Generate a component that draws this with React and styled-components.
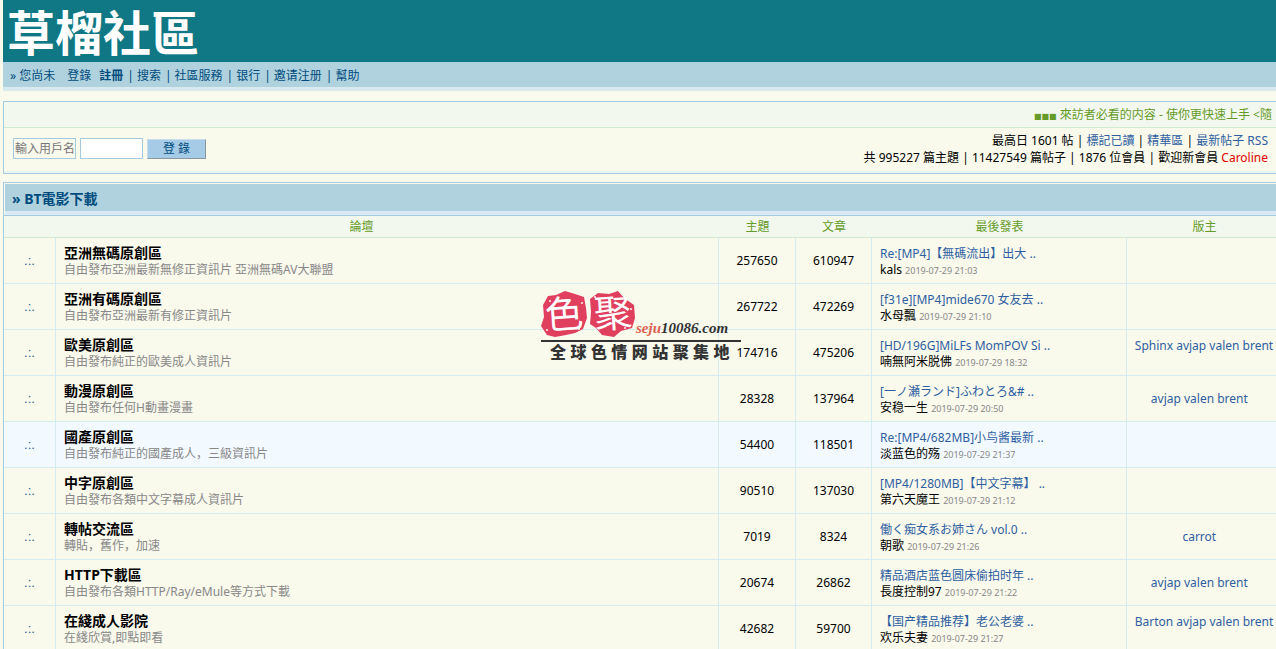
import React from "react";
import styled, { createGlobalStyle } from "styled-components";

const sans = '"Noto Sans", "Noto Sans CJK SC", "Noto Sans CJK TC", "Noto Sans CJK JP", sans-serif';

const Global = createGlobalStyle`
  * { box-sizing: border-box; }
  body {
    margin: 0;
    background: #f9f9ec;
    color: #000;
    font: 12px/17px ${sans};
    overflow-x: hidden;
  }
  a { color: #2f5fa1; text-decoration: none; }
  a:hover { text-decoration: underline; }
  input, button { font: inherit; }
`;

const Page = styled.div`
  position: relative;
  margin: 0 -7px 0 3px;
`;

const Banner = styled.header`
  height: 62px;
  padding: 0 4px;
  background: #0f7884;
`;

const SiteName = styled.h1`
  margin: 0;
  color: #fff;
  font: 700 48px/60px "Noto Sans CJK TC", sans-serif;
`;

const Nav = styled.nav`
  display: flex;
  align-items: center;
  gap: 4px;
  height: 29px;
  padding: 2px 7px 0;
  background: #afd2de;
  border-bottom: 4px solid #d9eaee;
  color: #004c7d;
  a { color: #004c7d; }
`;

const NavGroup = styled.span`
  display: flex;
  gap: 8px;
  &:first-child { gap: 12px; }
`;

const NavItem = styled.span`
  display: flex;
  gap: 3px;
`;

const Panel = styled.section`
  margin-top: ${(p) => p.$top}px;
  border: 1px solid #a6cbe0;
`;

const Notice = styled.div`
  display: flex;
  justify-content: flex-end;
  height: 26px;
  padding-right: 8px;
  background: #f3f8ef;
  border-bottom: 1px solid #d0ecd0;
  color: #659b28;
  line-height: 25px;
`;

const NoticeText = styled.div`
  width: 240px;
  overflow: hidden;
  white-space: nowrap;
`;

const Squares = styled.span`
  font: 8px/20px "DejaVu Sans", sans-serif;
`;

const Tools = styled.div`
  display: flex;
  justify-content: space-between;
  align-items: flex-start;
  padding: 4px 14px 5px 9px;
  border-bottom: 2px solid #e8f4f2;
`;

const Login = styled.form`
  display: flex;
  gap: 4px;
  padding-top: 6px;
`;

const Field = styled.input`
  width: 63px;
  height: 21px;
  padding: 0 1px;
  border: 1px solid #a6cbe0;
  background: ${(p) => (p.$plain ? "#f9f9ec" : "#fff")};
  &::placeholder { color: #777; opacity: 1; }
`;

const Submit = styled.button`
  width: 59px;
  height: 20px;
  margin-top: 1px;
  padding: 0;
  border: 1px solid;
  border-color: #c8dcec #8a96a0 #8a96a0 #c8dcec;
  background: #a6cbe7;
  color: #004c7d;
  font-size: 12px;
  line-height: 18px;
`;

const Stats = styled.div`
  text-align: right;
`;

const NewMember = styled.a`
  && { color: #e00000; }
`;

const SectionTitle = styled.h2`
  margin: 1px 0 0 1px;
  padding: 0 7px;
  height: 31px;
  background: #afd2de;
  border-bottom: 4px solid #d9e9f5;
  color: #004c7d;
  font-size: 14px;
  line-height: 29px;
`;

const Forums = styled.table`
  width: 100%;
  table-layout: fixed;
  border-collapse: separate;
  border-spacing: 0;
`;

const Th = styled.th`
  height: 23px;
  padding: 0;
  background: #f3f8ef;
  border-top: 1px solid #a6cbe0;
  border-bottom: 1px solid #d4e8d0;
  color: #659b28;
  font-weight: 400;
  line-height: 20px;
`;

const Row = styled.tr`
  height: 46px;
  background: ${(p) => (p.$active ? "#f3faff" : "transparent")};
`;

const Cell = styled.td`
  padding: 0 8px;
  border-bottom: 1px solid #d4ebf2;
  border-right: 1px solid #d4ebf2;
  text-align: ${(p) => (p.$center ? "center" : "left")};
  line-height: 15px;
`;

const TextCell = styled(Cell)`
  padding-top: 2px;
`;

const MarkCell = styled(Cell)`
  color: #2f5f91;
  font: 13px/15px "Liberation Sans", sans-serif;
`;

const ModCell = styled(Cell)`
  padding: 0 6px;
`;

const ForumName = styled.a`
  display: block;
  && { color: #000; }
  font-size: 14px;
  font-weight: 700;
  line-height: 17px;
`;

const Summary = styled.div`
  color: #888;
  line-height: 18px;
`;

const PostTitle = styled.a`
  display: block;
  line-height: 16px;
  white-space: nowrap;
`;

const Time = styled.time`
  color: #888;
  font-size: 9px;
`;

const Stamp = styled.aside`
  position: absolute;
  top: 288px;
  left: 538px;
  width: 200px;
  pointer-events: none;
`;

const StampTop = styled.div`
  display: flex;
  align-items: flex-end;
  height: 54px;
  border-bottom: 2px solid #333;
  svg { overflow: visible; }
`;

const StampUrl = styled.span`
  color: #333;
  font: italic 700 15px/24px "Liberation Serif", serif;
  em { color: #e0604e; }
`;

const StampLine = styled.div`
  padding-left: 9px;
  color: #333;
  font: 900 16px/22px "Liberation Sans", "Noto Sans CJK SC", sans-serif;
  white-space: nowrap;
`;

const forums = [
  ["亞洲無碼原創區", "自由發布亞洲最新無修正資訊片 亞洲無碼AV大聯盟", 257650, 610947, "Re:[MP4]【無碼流出】出大 ..", "kals", "21:03", ""],
  ["亞洲有碼原創區", "自由發布亞洲最新有修正資訊片", 267722, 472269, "[f31e][MP4]mide670 女友去 ..", "水母飄", "21:10", ""],
  ["歐美原創區", "自由發布純正的歐美成人資訊片", 174716, 475206, "[HD/196G]MiLFs MomPOV Si ..", "喃無阿米脱佛", "18:32", "Sphinx avjap valen brent"],
  ["動漫原創區", "自由發布任何H動畫漫畫", 28328, 137964, "[一ノ瀬ランド]ふわとろ&# ..", "安稳一生", "20:50", "avjap valen brent"],
  ["國產原創區", "自由發布純正的國產成人，三級資訊片", 54400, 118501, "Re:[MP4/682MB]小鸟酱最新 ..", "淡蓝色的殇", "21:37", ""],
  ["中字原創區", "自由發布各類中文字幕成人資訊片", 90510, 137030, "[MP4/1280MB]【中文字幕】 ..", "第六天魔王", "21:12", ""],
  ["轉帖交流區", "轉貼，舊作，加速", 7019, 8324, "働く痴女系お姉さん vol.0 ..", "朝歌", "21:26", "carrot"],
  ["HTTP下載區", "自由發布各類HTTP/Ray/eMule等方式下載", 20674, 26862, "精品酒店蓝色圆床偷拍时年 ..", "長度控制97", "21:22", "avjap valen brent"],
  ["在綫成人影院", "在綫欣賞,即點即看", 42682, 59700, "【国产精品推荐】老公老婆 ..", "欢乐夫妻", "21:27", "Barton avjap valen brent"],
];

const navLinks = ["搜索", "社區服務", "银行", "邀请注册", "幫助"];

function Seals() {
  return (
    <svg width="95" height="50" viewBox="0 0 95 50" aria-hidden="true">
      <g fill="#e0405e">
        <path d="M2 15 L7 6 L15 5 L24 1 L34 4 L43 7 L45 18 L46 28 L42 39 L34 43 L25 45 L14 47 L6 45 L0 36 L3 27 Z" />
        <path d="M49 9 L57 3 L68 4 L77 1 L83 8 L93 15 L94 28 L91 38 L80 41 L73 47 L61 45 L55 38 L49 34 L50 22 Z" />
      </g>
      <g fill="#f9f9ec">
        <circle cx="9" cy="11" r="1" />
        <circle cx="41" cy="13" r="1" />
        <circle cx="6" cy="40" r="1" />
        <circle cx="38" cy="39" r="1" />
        <circle cx="54" cy="7" r="1" />
        <circle cx="90" cy="19" r="1" />
        <circle cx="84" cy="38" r="1" />
      </g>
      <g fill="#fff" fontFamily="Noto Sans CJK SC, sans-serif" fontSize="38" fontWeight="400">
        <text x="4" y="38" transform="rotate(-4 22 24)">色</text>
        <text x="53" y="37" transform="rotate(-4 71 24)">聚</text>
      </g>
    </svg>
  );
}

export default function App() {
  return (
    <Page>
      <Global />
      <Banner>
        <SiteName>草榴社區</SiteName>
      </Banner>
      <Nav>
        <NavGroup>
          <span>» 您尚未</span>
          <NavGroup>
            <a href="#login">登錄</a>
            <a href="#register"><b>註冊</b></a>
          </NavGroup>
        </NavGroup>
        {navLinks.map((label) => (
          <NavItem key={label}>
            <span>|</span>
            <a href={"#" + label}>{label}</a>
          </NavItem>
        ))}
      </Nav>

      <Panel $top={10}>
        <Notice>
          <NoticeText>
            <Squares>■■■</Squares> 來訪者必看的内容 - 使你更快速上手 &lt;隨
          </NoticeText>
        </Notice>
        <Tools>
          <Login onSubmit={(e) => e.preventDefault()}>
            <Field $plain type="text" placeholder="輸入用戶名" aria-label="輸入用戶名" />
            <Field type="password" aria-label="密碼" />
            <Submit type="submit">登 錄</Submit>
          </Login>
          <Stats>
            <div>
              最高日 1601 帖 | <a href="#read">標記已讀</a> | <a href="#best">精華區</a> | <a href="#rss">最新帖子 RSS</a>
            </div>
            <div>
              共 995227 篇主題 | 11427549 篇帖子 | 1876 位會員 | 歡迎新會員 <NewMember href="#member">Caroline</NewMember>
            </div>
          </Stats>
        </Tools>
      </Panel>

      <Panel $top={8}>
        <SectionTitle>» BT電影下載</SectionTitle>
        <Forums>
          <colgroup>
            <col width="52" />
            <col />
            <col width="77" />
            <col width="76" />
            <col width="255" />
            <col width="155" />
          </colgroup>
          <thead>
            <tr>
              <Th colSpan={2}>論壇</Th>
              <Th>主題</Th>
              <Th>文章</Th>
              <Th>最後發表</Th>
              <Th>版主</Th>
            </tr>
          </thead>
          <tbody>
            {forums.map(([name, about, topics, posts, last, author, time, mods], i) => (
              <Row key={name} $active={i === 4}>
                <MarkCell $center>.:.</MarkCell>
                <TextCell>
                  <ForumName href="#forum">{name}</ForumName>
                  <Summary>{about}</Summary>
                </TextCell>
                <Cell $center>{topics}</Cell>
                <Cell $center>{posts}</Cell>
                <TextCell>
                  <PostTitle href="#post">{last}</PostTitle>
                  {author} <Time>2019-07-29 {time}</Time>
                </TextCell>
                <ModCell $center>
                  {mods && <><a href="#mods">{mods}</a> {"\u00a0\u00a0"}</>}
                </ModCell>
              </Row>
            ))}
          </tbody>
        </Forums>
      </Panel>

      <Stamp>
        <StampTop>
          <Seals />
          <StampUrl><em>seju</em>10086.com</StampUrl>
        </StampTop>
        <StampLine>全 球 色 情 网 站 聚 集 地</StampLine>
      </Stamp>
    </Page>
  );
}
